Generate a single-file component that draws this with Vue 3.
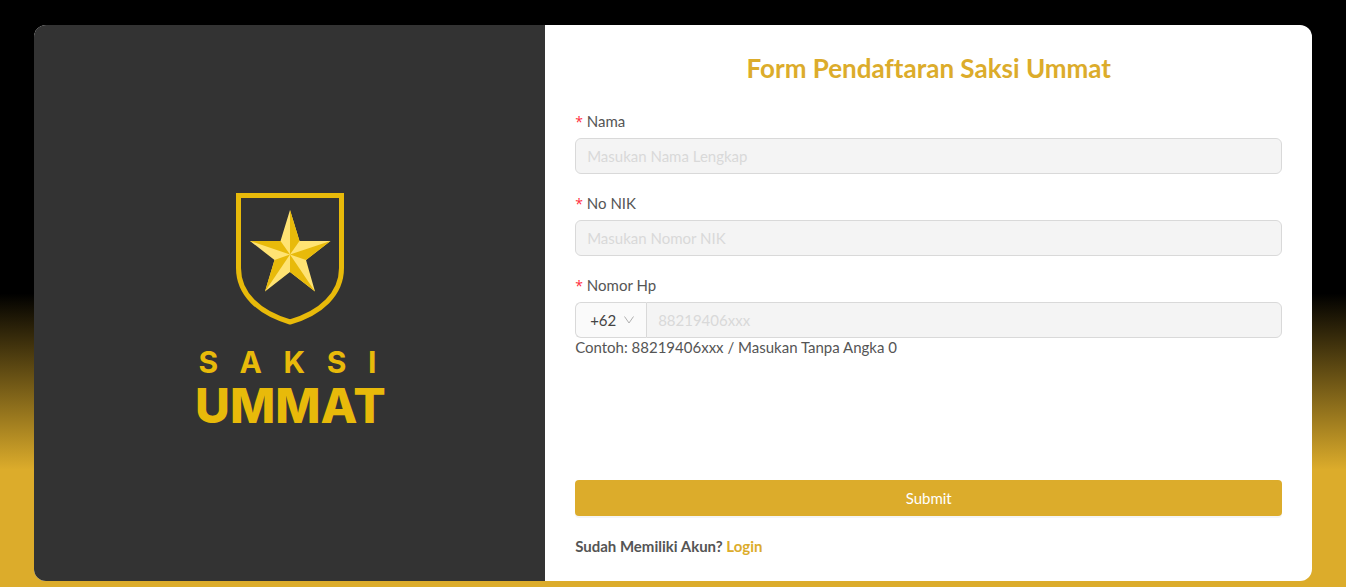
<script setup>
import { ref } from 'vue'

const fields = [
  { id: 'nama', label: 'Nama', placeholder: 'Masukan Nama Lengkap' },
  { id: 'nik', label: 'No NIK', placeholder: 'Masukan Nomor NIK' },
]
const prefix = ref('+62')
</script>

<template>
  <div class="page">
    <main class="card">
      <section class="brand" aria-label="Saksi Ummat">
        <svg class="shield" viewBox="0 0 110 134" aria-hidden="true">
          <path
            d="M3.500 3.500H106.500V76C106.500 102 86 121 55 130C24 121 3.500 102 3.500 76Z"
            fill="none" stroke="#e8ba0a" stroke-width="5"
          />
          <path d="M55 18L64.500 49H95.500L71 68L80 99.500L55 80L30 99.500L39.500 68L15 49H45.500Z" fill="#ffe373" />
          <g fill="#e8ba0a">
            <path d="M55 18L64.500 49L55 62.500Z" />
            <path d="M95.500 49L71 68L55 62.500Z" />
            <path d="M80 99.500L55 80V62.500Z" />
            <path d="M30 99.500L39.500 68L55 62.500Z" />
            <path d="M15 49H45.500L55 62.500Z" />
          </g>
        </svg>
        <div class="saksi"><span>S</span><span>A</span><span>K</span><span>S</span><span>I</span></div>
        <div class="ummat">UMMAT</div>
      </section>

      <section class="panel">
        <h1>Form Pendaftaran Saksi Ummat</h1>
        <form @submit.prevent>
          <div v-for="field in fields" :key="field.id" class="field">
            <label :for="field.id"><span class="star">*</span>{{ field.label }}</label>
            <input :id="field.id" class="control" type="text" :placeholder="field.placeholder" disabled>
          </div>
          <div class="field phone">
            <label for="hp"><span class="star">*</span>Nomor Hp</label>
            <div class="group">
              <div class="prefix">
                <select v-model="prefix" aria-label="Kode negara">
                  <option>+62</option>
                </select>
                <svg class="chevron" viewBox="0 0 12 12" aria-hidden="true">
                  <path d="M1.500 2.500L6 9L10.500 2.500" fill="none" stroke="#b0b0b0" stroke-width="1" />
                </svg>
              </div>
              <input id="hp" class="control" type="tel" placeholder="88219406xxx" disabled>
            </div>
            <p class="hint">Contoh: 88219406xxx / Masukan Tanpa Angka 0</p>
          </div>
          <button type="submit">Submit</button>
        </form>
        <p class="login">Sudah Memiliki Akun? <a href="#">Login</a></p>
      </section>
    </main>
  </div>
</template>

<style>
body {
  margin: 0;
}
</style>

<style scoped>
* {
  box-sizing: border-box;
}
.page {
  min-height: 100vh;
  padding: 25px 0 6px;
  background: linear-gradient(#000 50%, #dcac2b 80%);
  font-family: Lato, "Open Sans", sans-serif;
  font-size: 15px;
  line-height: 22px;
  font-variant-ligatures: none;
  color: #555;
}
.card {
  display: grid;
  grid-template-columns: 2fr 3fr;
  width: 95%;
  margin: 0 auto;
  border-radius: 12px;
  overflow: hidden;
  background: #fff;
}
.brand {
  display: flex;
  flex-direction: column;
  align-items: center;
  justify-content: center;
  padding: 16px 0 0 2px;
  background: #333;
  color: #e8ba0a;
  font-family: Inter, "Open Sans", sans-serif;
  font-weight: 700;
}
.shield {
  width: 110px;
  height: 134px;
}
.saksi {
  display: flex;
  justify-content: space-between;
  width: 178px;
  margin: 17px 6px 0 0;
  font-size: 30px;
  line-height: 38px;
}
.ummat {
  font-size: 48px;
  font-weight: 800;
  line-height: 50px;
}
.panel {
  padding: 30px 30px 24px;
}
h1 {
  margin: 0 0 29px;
  font-size: 26px;
  line-height: 26px;
  font-weight: 700;
  text-align: center;
  color: #dcac2b;
}
.field {
  margin-bottom: 18px;
}
label {
  display: block;
  margin-bottom: 6px;
}
.star {
  margin-right: 4px;
  font-family: "Open Sans", sans-serif;
  font-size: 14px;
  line-height: 20px;
  color: #ff2d3d;
}
.control {
  display: block;
  width: 100%;
  height: 36px;
  padding: 0 11px;
  border: 1px solid #d9d9d9;
  border-radius: 6px;
  background: #f4f4f4;
  font: inherit;
}
.control::placeholder {
  color: #d9d9d9;
  opacity: 1;
}
.group {
  display: flex;
}
.group .control {
  flex: 1;
  min-width: 0;
  border-radius: 0 6px 6px 0;
}
.prefix {
  position: relative;
  width: 71px;
  border: 1px solid #d9d9d9;
  border-right: 0;
  border-radius: 6px 0 0 6px;
  background: #fafafa;
}
.prefix select {
  width: 100%;
  height: 100%;
  padding: 0 14px;
  border: 0;
  background: transparent;
  appearance: none;
  font: inherit;
  color: #444;
}
.chevron {
  position: absolute;
  top: 11px;
  right: 11px;
  width: 12px;
  height: 12px;
  pointer-events: none;
}
.phone {
  margin-bottom: 124px;
}
.hint {
  margin: 0;
  line-height: 18px;
}
button {
  display: block;
  width: 100%;
  height: 36px;
  border: 0;
  border-radius: 4px;
  background: #dcac2b;
  box-shadow: 0 2px 0 rgba(0, 0, 0, 0.04);
  font: inherit;
  color: #fff;
}
.login {
  margin: 19px 0 0;
  font-weight: 700;
}
.login a {
  color: #dcac2b;
  text-decoration: none;
}
</style>
